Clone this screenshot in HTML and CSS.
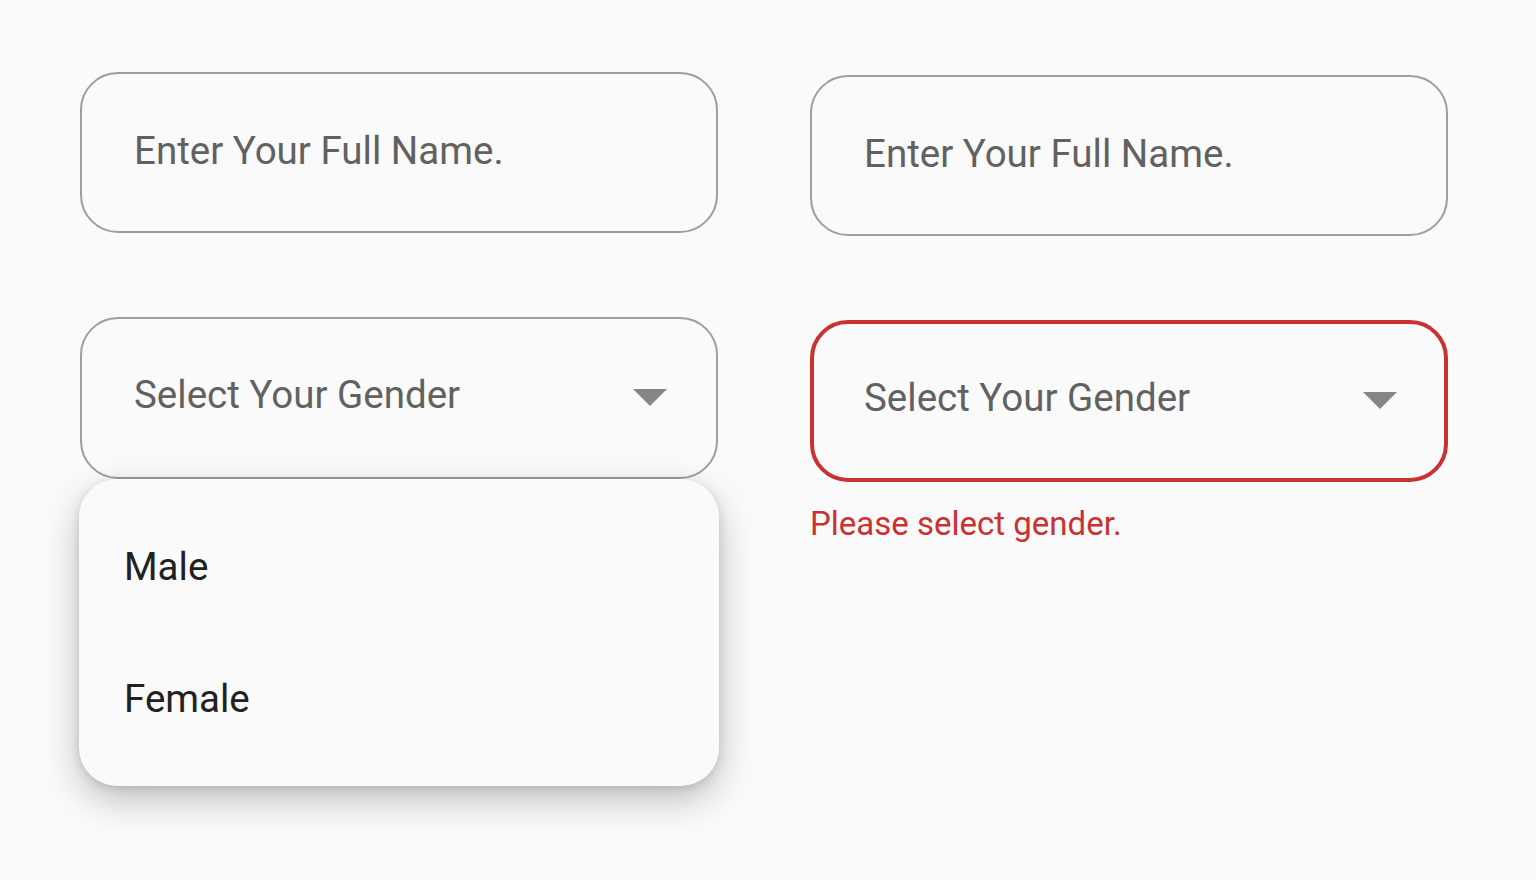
FILE: index.html
```html
<!DOCTYPE html>
<html lang="en">
<head>
    <meta charset="UTF-8">
    <meta name="viewport" content="width=device-width, initial-scale=1.0">
    <title>Form Fields</title>
    <link rel="stylesheet" href="styles.css">
</head>
<body>

<div class="form-grid">
    <div class="column">
        <div class="field">
            <span class="placeholder">Enter Your Full Name.</span>
        </div>
        <div class="select-wrap">
            <div class="field select">
                <span class="placeholder">Select Your Gender</span>
                <svg class="arrow" width="34" height="17" viewBox="0 0 34 17"><polygon points="0,0 34,0 17,17"/></svg>
            </div>
            <div class="menu">
                <div class="menu-item">Male</div>
                <div class="menu-item">Female</div>
            </div>
        </div>
    </div>

    <div class="column column-right">
        <div class="field">
            <span class="placeholder">Enter Your Full Name.</span>
        </div>
        <div class="select-wrap">
            <div class="field select error">
                <span class="placeholder">Select Your Gender</span>
                <svg class="arrow" width="34" height="17" viewBox="0 0 34 17"><polygon points="0,0 34,0 17,17"/></svg>
            </div>
            <div class="error-text">Please select gender.</div>
        </div>
    </div>
</div>

</body>
</html>
```

FILE: styles.css
```css
html, body {
    height: 100%;
}
body {
    font-family: Roboto, 'Noto Sans', sans-serif;
    background-color: #fafafa;
    margin: 0;
    padding: 0;
    min-height: 880px;
}
.form-grid {
    display: grid;
    grid-template-columns: 638px 638px;
    column-gap: 92px;
    padding: 72px 0 0 80px;
}
.column {
    display: flex;
    flex-direction: column;
    gap: 84px;
}
.column-right {
    padding-top: 3px;
}
.field {
    box-sizing: border-box;
    height: 161px;
    border: 2px solid #9e9e9e;
    border-radius: 38px;
    padding: 0 49px 4px 52px;
    display: flex;
    align-items: center;
    justify-content: space-between;
    background-color: #fafafa;
}
.select {
    height: 162px;
    padding-bottom: 7px;
}
.placeholder {
    font-size: 38.5px;
    color: #616161;
}
.arrow {
    fill: #858585;
    margin-top: 5px;
}
.error {
    border: 4px solid #c83232;
    padding-left: 50px;
    padding-right: 47px;
}
.error-text {
    margin-top: 22px;
    font-size: 33px;
    color: #c83232;
}
.select-wrap {
    position: relative;
}
.menu {
    position: absolute;
    top: 162px;
    left: -1px;
    width: 640px;
    box-sizing: border-box;
    padding: 21px 0 22px;
    background-color: #fafafa;
    border-radius: 38px;
    box-shadow: 0 14px 36px rgba(0, 0, 0, 0.24), 0 2px 10px rgba(0, 0, 0, 0.12);
    z-index: 10;
}
.menu-item {
    height: 132px;
    display: flex;
    align-items: center;
    padding-left: 45px;
    font-size: 38.5px;
    color: #212121;
}
```
